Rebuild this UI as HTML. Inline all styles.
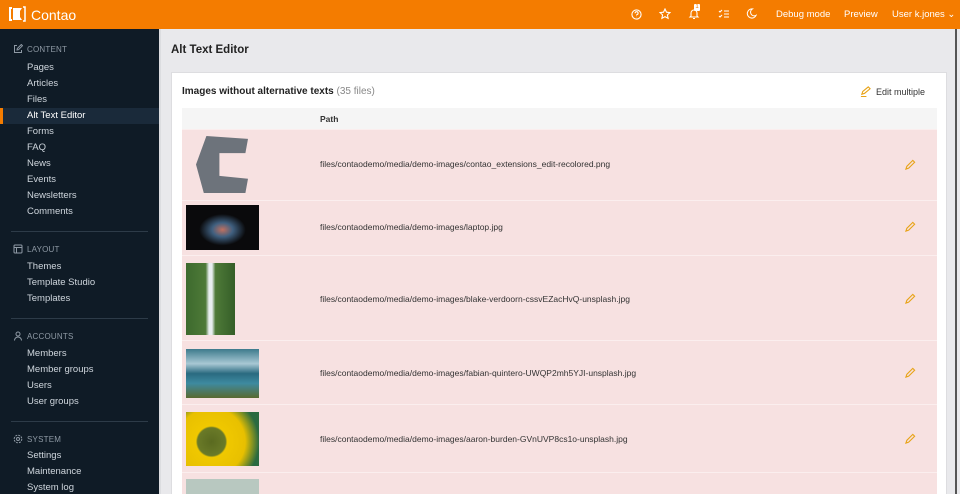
<!DOCTYPE html>
<html style="width:960px;height:494px;overflow:hidden"><head><meta charset="utf-8"><style>
*{margin:0;padding:0;box-sizing:border-box}
body{width:960px;height:494px;overflow:hidden;font-family:"Liberation Sans",sans-serif;background:#e9e9ec;position:relative}
.hd{position:absolute;left:0;top:0;width:960px;height:29px;background:#f47c00;color:#fff}
.logo{position:absolute;left:8px;top:6px;font-size:14px}
.hd .r{position:absolute;top:9px;font-size:9.5px}
.sb{position:absolute;left:0;top:29px;width:159px;height:465px;background:#0f1b26;color:#cfd6dd;font-size:9.5px}
.sec{position:absolute;left:13px;font-size:8px;color:#8f9aa5;letter-spacing:.2px}
.sec svg{position:absolute;left:0;top:-1px}
.sec span{margin-left:14px}
.it{position:absolute;left:27px;height:16px;line-height:16px}
.act{position:absolute;left:0;width:159px;height:16px;background:#1a2a3a;top:79px}
.act:before{content:"";position:absolute;left:0;top:0;width:3px;height:16px;background:#f47c00}
.hr{position:absolute;left:11px;width:137px;height:1px;background:#2d3b48}
.edge{position:absolute;left:159px;top:29px;width:2px;height:465px;background:#dcdde0}
.title{position:absolute;left:171px;top:44px;font-size:11.5px;font-weight:bold;color:#222}
.card{position:absolute;left:171px;top:72px;width:776px;height:422px;overflow:hidden;background:#fff;border:1px solid #dddde0;border-bottom:0}
.ch{position:absolute;left:10px;top:13px;font-size:10px;font-weight:bold;color:#222}
.ch span{font-weight:normal;color:#888}
.em{position:absolute;right:21px;top:13px;font-size:9px;color:#333}
.th{position:absolute;left:10px;top:35px;width:755px;height:21px;background:#f5f5f5;font-size:8.5px;font-weight:bold;color:#333}
.row{position:absolute;left:10px;width:755px;background:#f7e1e1;border-top:1px solid #fbeeee}
.row .p{position:absolute;left:138px;font-size:8.5px;color:#333}
.row svg.pe{position:absolute;left:723px}
.img{position:absolute;left:4px}
.scr{position:absolute;left:955px;top:29px;width:2px;height:465px;background:#555}
</style></head><body>
<div class="hd">
<div class="logo"><svg width="18" height="16" viewBox="0 0 18 16" style="vertical-align:-2px;margin-right:5px"><path d="M1 1h3v2H3v10h1v2H1z" fill="#fff"/><path d="M5 2h9l-2 3v6l2 3H5z" fill="#fff"/><path d="M15 1h2v14h-2" fill="none" stroke="#fff" stroke-width="1.5"/></svg>Contao</div>
<svg style="position:absolute;left:631px;top:9px" width="11" height="11" viewBox="0 0 12 12" fill="none" stroke="#fff" stroke-width="1.2"><circle cx="6" cy="6" r="5"/><path d="M4.5 4.6a1.6 1.6 0 1 1 2 1.5c-.5.2-.5.6-.5 1M6 8.6v.3"/></svg>
<svg style="position:absolute;left:659px;top:8px" width="12" height="12" viewBox="0 0 12 12" fill="none" stroke="#fff" stroke-width="1.1"><path d="M6 1l1.5 3.2 3.4.4-2.5 2.3.7 3.4L6 8.6 2.9 10.3l.7-3.4L1.1 4.6l3.4-.4z"/></svg>
<svg style="position:absolute;left:688px;top:8px" width="12" height="12" viewBox="0 0 12 12" fill="none" stroke="#fff" stroke-width="1.1"><path d="M3 8V5a3 3 0 0 1 6 0v3l1 1H2zM5 10.5h2"/></svg>
<div style="position:absolute;left:694px;top:4px;width:6px;height:7px;background:#fff;color:#f47c00;font-size:6px;text-align:center;line-height:7px;border-radius:1px">1</div>
<svg style="position:absolute;left:718px;top:9px" width="12" height="10" viewBox="0 0 12 10" fill="none" stroke="#fff" stroke-width="1.1"><path d="M1 2l1 1 2-2M1 7l1 1 2-2M6 2h5M6 5h5M6 8h5"/></svg>
<svg style="position:absolute;left:746px;top:8px" width="11" height="11" viewBox="0 0 12 12" fill="none" stroke="#fff" stroke-width="1.1"><path d="M7 1a5 5 0 1 0 4 7A4 4 0 0 1 7 1z"/></svg>
<div class="r" style="left:776px">Debug mode</div>
<div class="r" style="left:844px">Preview</div>
<div class="r" style="left:892px">User k.jones ⌄</div>
</div>
<div class="sb">
<div class="sec" style="top:16px"><svg width="10" height="10" viewBox="0 0 10 10" fill="none" stroke="#8f9aa5"><path d="M4 1.5H1.5v7h7V6M4 6l.3-1.5 4-4 1.2 1.2-4 4z"/></svg><span>CONTENT</span></div>
<div class="act"></div>
<div class="it" style="top:31px">Pages</div><div class="it" style="top:47px">Articles</div><div class="it" style="top:63px">Files</div><div class="it" style="top:79px;color:#fff">Alt Text Editor</div><div class="it" style="top:95px">Forms</div><div class="it" style="top:111px">FAQ</div><div class="it" style="top:127px">News</div><div class="it" style="top:143px">Events</div><div class="it" style="top:159px">Newsletters</div><div class="it" style="top:175px">Comments</div>
<div class="hr" style="top:202px"></div>
<div class="sec" style="top:216px"><svg width="10" height="10" viewBox="0 0 10 10" fill="none" stroke="#8f9aa5"><rect x="1" y="1" width="8" height="8" rx="1"/><path d="M1 3.5h8M3.5 3.5v5.5"/></svg><span>LAYOUT</span></div>
<div class="it" style="top:230px">Themes</div><div class="it" style="top:246px">Template Studio</div><div class="it" style="top:262px">Templates</div>
<div class="hr" style="top:289px"></div>
<div class="sec" style="top:303px"><svg width="10" height="10" viewBox="0 0 10 10" fill="none" stroke="#8f9aa5"><circle cx="5" cy="3" r="2"/><path d="M1.5 9.5a3.5 3.5 0 0 1 7 0"/></svg><span>ACCOUNTS</span></div>
<div class="it" style="top:317px">Members</div><div class="it" style="top:333px">Member groups</div><div class="it" style="top:349px">Users</div><div class="it" style="top:365px">User groups</div>
<div class="hr" style="top:392px"></div>
<div class="sec" style="top:406px"><svg width="10" height="10" viewBox="0 0 10 10" fill="none" stroke="#8f9aa5"><circle cx="5" cy="5" r="1.5"/><circle cx="5" cy="5" r="3.8" stroke-dasharray="2 1"/></svg><span>SYSTEM</span></div>
<div class="it" style="top:419px">Settings</div><div class="it" style="top:435px">Maintenance</div><div class="it" style="top:451px">System log</div>
</div>
<div class="edge"></div>
<div class="title">Alt Text Editor</div>
<div class="card">
<div class="ch">Images without alternative texts <span>(35 files)</span></div>
<div class="em"><svg width="11" height="11" viewBox="0 0 12 12" fill="none" stroke="#e8a317" stroke-width="1.2" style="vertical-align:-2px;margin-right:5px"><path d="M2 9l1-3 6-5 2 2-6 5zM1 11.5h6"/></svg>Edit multiple</div>
<div class="th"><span style="position:absolute;left:138px;top:6px">Path</span></div>
<div class="row" style="top:56px;height:71px"><div class="img" style="left:14px;top:6px;width:52px;height:57px;background:#6d737b;clip-path:polygon(20% 0,100% 5%,95% 30%,45% 30%,45% 70%,100% 75%,95% 100%,15% 100%,0 50%)"></div><div class="p" style="top:29px">files/contaodemo/media/demo-images/contao_extensions_edit-recolored.png</div><svg class="pe" style="top:29px" width="11" height="11" viewBox="0 0 12 12" fill="none" stroke="#e8a317" stroke-width="1.2"><path d="M1 11l1-3 6.5-6.5 2 2L4 10z"/></svg></div>
<div class="row" style="top:127px;height:55px"><div class="img" style="top:4px;width:73px;height:45px;background:radial-gradient(ellipse at 50% 55%,#c07060 0,#406080 20%,#0a0a0c 45%)"></div><div class="p" style="top:21px">files/contaodemo/media/demo-images/laptop.jpg</div><svg class="pe" style="top:20px" width="11" height="11" viewBox="0 0 12 12" fill="none" stroke="#e8a317" stroke-width="1.2"><path d="M1 11l1-3 6.5-6.5 2 2L4 10z"/></svg></div>
<div class="row" style="top:182px;height:85px"><div class="img" style="top:7px;width:49px;height:72px;background:linear-gradient(90deg,#3d6a2e 0,#4e7a38 40%,#e8eef0 47%,#e8eef0 53%,#4e7a38 60%,#355e28 100%)"></div><div class="p" style="top:38px">files/contaodemo/media/demo-images/blake-verdoorn-cssvEZacHvQ-unsplash.jpg</div><svg class="pe" style="top:37px" width="11" height="11" viewBox="0 0 12 12" fill="none" stroke="#e8a317" stroke-width="1.2"><path d="M1 11l1-3 6.5-6.5 2 2L4 10z"/></svg></div>
<div class="row" style="top:267px;height:64px"><div class="img" style="top:8px;width:73px;height:49px;background:linear-gradient(#3d7a8c 0,#a8c8d4 30%,#2a6a80 50%,#3e8aa0 70%,#5a6a30 100%)"></div><div class="p" style="top:27px">files/contaodemo/media/demo-images/fabian-quintero-UWQP2mh5YJI-unsplash.jpg</div><svg class="pe" style="top:26px" width="11" height="11" viewBox="0 0 12 12" fill="none" stroke="#e8a317" stroke-width="1.2"><path d="M1 11l1-3 6.5-6.5 2 2L4 10z"/></svg></div>
<div class="row" style="top:331px;height:68px"><div class="img" style="top:7px;width:73px;height:54px;background:radial-gradient(circle at 35% 55%,#5a6a20 0,#6a7a28 25%,#f0c800 28%,#e8c000 60%,#2a6a40 85%)"></div><div class="p" style="top:29px">files/contaodemo/media/demo-images/aaron-burden-GVnUVP8cs1o-unsplash.jpg</div><svg class="pe" style="top:28px" width="11" height="11" viewBox="0 0 12 12" fill="none" stroke="#e8a317" stroke-width="1.2"><path d="M1 11l1-3 6.5-6.5 2 2L4 10z"/></svg></div>
<div class="row" style="top:399px;height:40px"><div class="img" style="top:6px;width:73px;height:30px;background:#b8c8c0"></div></div>
</div>
<div class="scr"></div>
</body></html>
